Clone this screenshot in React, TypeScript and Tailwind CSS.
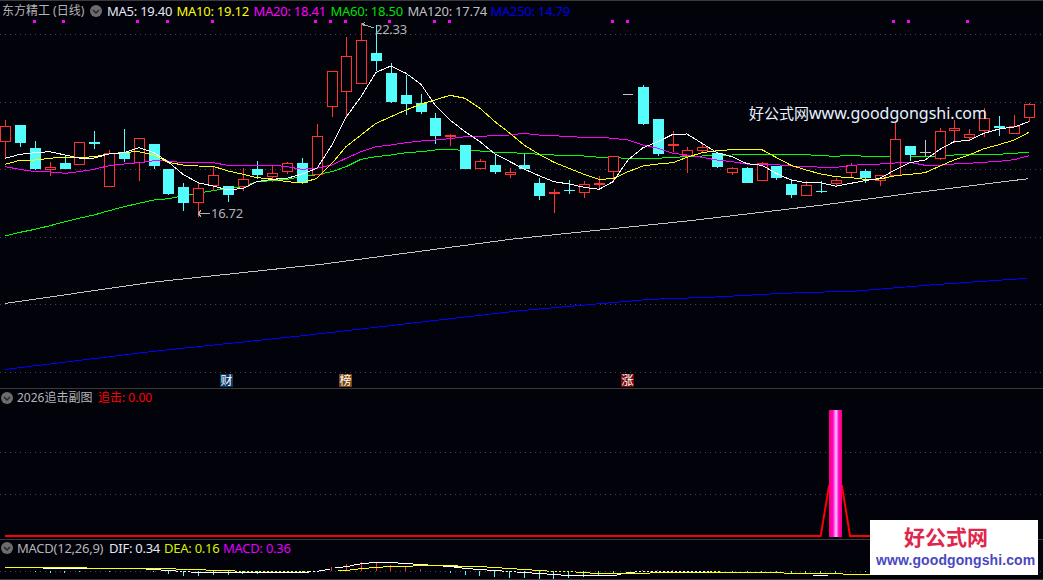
import React from 'react'

const bg = '#02020b'

// one row per trading day: body top, body bottom, high, low (read at 3x) and colour
type Candle = [number, number, number, number, 'r' | 'c' | 'g']
const candles: Candle[] = [
  [379, 427, 360, 475, 'r'], [376, 428, 376, 440, 'c'], [445, 507, 423, 510, 'c'], [502, 509, 487, 527, 'r'],
  [489, 507, 465, 507, 'c'], [427, 494, 427, 494, 'r'], [427, 431, 393, 447, 'c'], [460, 560, 450, 560, 'r'],
  [457, 476, 388, 486, 'c'], [415, 490, 415, 543, 'r'], [433, 497, 433, 507, 'c'], [507, 582, 507, 585, 'c'],
  [561, 608, 549, 632, 'c'], [565, 608, 549, 650, 'r'], [526, 557, 500, 572, 'r'], [558, 584, 558, 606, 'c'],
  [538, 562, 505, 572, 'r'], [507, 525, 484, 537, 'c'], [520, 530, 497, 545, 'r'], [490, 515, 487, 522, 'r'],
  [489, 549, 474, 552, 'c'], [409, 525, 373, 525, 'r'], [214, 320, 214, 351, 'r'], [169, 275, 111, 355, 'r'],
  [121, 251, 70, 251, 'r'], [159, 183, 75, 213, 'c'], [219, 306, 190, 308, 'c'], [285, 312, 225, 345, 'c'],
  [308, 336, 283, 342, 'c'], [354, 408, 340, 432, 'c'], [405, 410, 403, 438, 'r'], [435, 507, 435, 507, 'c'],
  [484, 507, 478, 507, 'r'], [495, 515, 465, 522, 'c'], [517, 524, 505, 533, 'r'], [495, 507, 462, 507, 'c'],
  [549, 588, 534, 600, 'c'], [577, 580, 568, 638, 'r'], [570, 572, 540, 582, 'c'], [553, 578, 544, 594, 'r'],
  [550, 553, 528, 568, 'r'], [469, 515, 469, 545, 'r'], [283, 284, 283, 284, 'g'], [261, 372, 256, 375, 'c'],
  [357, 462, 357, 468, 'c'], [433, 437, 393, 455, 'r'], [451, 467, 440, 518, 'r'], [442, 452, 433, 460, 'r'],
  [459, 500, 455, 503, 'c'], [505, 518, 502, 525, 'r'], [504, 549, 502, 549, 'c'], [490, 544, 487, 544, 'r'],
  [498, 534, 498, 540, 'c'], [552, 585, 537, 594, 'c'], [556, 587, 544, 587, 'r'], [574, 577, 544, 578, 'c'],
  [541, 551, 533, 558, 'r'], [496, 518, 490, 530, 'r'], [513, 535, 507, 548, 'c'], [526, 544, 526, 558, 'r'],
  [418, 527, 370, 527, 'r'], [438, 465, 438, 484, 'c'], [457, 459, 420, 468, 'g'], [394, 476, 385, 479, 'r'],
  [385, 392, 360, 430, 'r'], [403, 413, 388, 420, 'r'], [355, 394, 325, 410, 'r'], [379, 384, 348, 408, 'c'],
  [379, 401, 345, 403, 'r'], [313, 353, 310, 367, 'r'],
]

const ma5 = [
  475, 463, 458, 455, 465, 474, 474, 462, 458, 443, 458, 485, 523, 548, 558, 570, 565, 545, 538, 535, 522, 505, 435, 352,
  290, 217, 198, 220, 253, 315, 360, 395, 425, 462, 485, 507, 527, 545, 552, 562, 568, 545, 480, 443, 425, 403, 402,
  430, 458, 470, 491, 496, 520, 540, 548, 548, 559, 550, 542, 535, 510, 488, 480, 448, 425, 421, 400, 387, 381, 365,
]
const ma10 = [
  493, 481, 480, 475, 471, 473, 470, 462, 457, 455, 465, 487, 495, 498, 499, 513, 523, 533, 537, 545, 549, 535, 490, 440,
  405, 370, 350, 330, 312, 300, 286, 295, 325, 365, 400, 435, 463, 487, 505, 523, 538, 536, 515, 498, 492, 488, 472,
  458, 452, 449, 449, 449, 472, 496, 510, 522, 530, 533, 538, 537, 527, 523, 518, 498, 480, 465, 446, 434, 420, 397,
]
const ma20 = [
  500, 508, 515, 516, 520, 515, 508, 497, 492, 488, 482, 483, 488, 488, 488, 496, 497, 497, 495, 500, 508, 505, 495, 475,
  455, 440, 435, 428, 423, 420, 416, 410, 410, 406, 405, 400, 405, 407, 410, 412, 412, 415, 420, 435, 445, 460, 465,
  472, 480, 485, 492, 494, 494, 498, 499, 502, 502, 497, 492, 492, 489, 487, 496, 496, 492, 490, 487, 484, 479, 467,
]
const ma60 = [
  708, 697, 688, 677, 665, 655, 645, 632, 620, 610, 600, 596, 588, 580, 572, 565, 560, 545, 542, 538, 530, 524, 515, 500,
  478, 470, 465, 458, 455, 450, 448, 452, 453, 457, 458, 460, 463, 465, 467, 468, 472, 473, 475, 475, 475, 472, 470,
  468, 466, 465, 463, 463, 464, 464, 464, 467, 469, 466, 469, 469, 468, 468, 468, 468, 465, 464, 464, 463, 460, 457,
]

const ma120: [number, number][] = [[5, 303.5], [150, 282.5], [300, 266.5], [320, 264.5], [513, 239], [690, 220.7], [823, 205], [923, 191.7], [1028, 178.7]]
const ma250: [number, number][] = [[5, 369.5], [150, 351.7], [300, 336], [520, 310.7], [650, 299.3], [710, 297.3], [783, 293.3], [857, 291], [930, 285], [1027, 278.3]]

const dots = [34, 63, 137, 167, 212, 315, 330, 345, 389, 434, 449, 612, 627, 893, 908, 967]

// macd steps, [x1, x2, y] in page pixels
const y3 = (v: number) => 555 + v / 3
const dea: [number, number, number][] = [
  [5, 43, 37], [43, 87, 38], [87, 176, 40.5], [176, 206, 43], [206, 235, 46],
  [338, 350, 46], [350, 358, 43], [358, 369, 40], [369, 383, 37], [383, 413, 35], [413, 458, 31], [458, 487, 34],
  [487, 502, 37], [502, 517, 40], [517, 532, 43], [532, 547, 46], [576, 590, 52], [590, 620, 55], [620, 650, 54],
  [650, 739, 51], [739, 784, 53], [784, 784, 53], [784, 843, 56], [843, 870, 58],
]
const dif: [number, number, number][] = [
  [43, 87, 40.5], [146, 161, 43], [161, 176, 46], [191, 309, 52], [319, 325, 46], [325, 330, 44], [335, 343, 37], [343, 350, 34],
  [350, 354, 32], [354, 360, 28], [360, 369, 25], [369, 398, 22], [398, 413, 25], [413, 428, 28], [443, 458, 34],
  [454, 462, 37], [462, 473, 40], [473, 487, 43], [487, 502, 46], [517, 532, 52], [532, 547, 55], [547, 561, 58],
  [561, 617, 61], [617, 621, 58], [626, 635, 52], [739, 784, 53], [813, 828, 60],
]
const difDotted: [number, number][] = [[176, 191], [309, 319], [502, 517], [635, 710]]
const deaDotted: [number, number][] = [[235, 309], [547, 576], [710, 720]]
const macdBars: [number, number, 'r' | 'c'][] = [
  [35, 50, 'c'], [50, 53, 'c'], [64, 53, 'c'], [79, 51, 'c'], [109, 51, 'c'], [153, 51, 'c'], [168, 56, 'c'], [183, 63, 'c'],
  [198, 63, 'c'], [213, 60, 'c'], [228, 60, 'c'], [242, 56, 'c'], [257, 56, 'c'], [272, 51, 'c'], [287, 51, 'c'], [302, 51, 'c'],
  [331, 37, 'r'], [346, 28, 'r'], [361, 22, 'r'], [376, 22, 'r'], [390, 30, 'r'], [405, 35, 'r'], [420, 42, 'r'],
  [450, 53, 'c'], [465, 60, 'c'], [479, 63, 'c'], [494, 67, 'c'], [509, 68, 'c'], [524, 68, 'c'], [539, 72, 'c'], [553, 72, 'c'],
  [568, 68, 'c'], [583, 65, 'c'], [598, 60, 'c'], [613, 55, 'c'],
  [642, 46, 'r'], [657, 46, 'r'], [672, 46, 'r'], [687, 47, 'r'],
  [732, 51, 'c'], [747, 52, 'c'], [761, 52, 'c'], [776, 52, 'c'], [791, 56, 'c'], [805, 56, 'c'], [820, 54, 'c'], [835, 54, 'c'], [865, 51, 'c'],
]

const cx = (i: number) => Math.round(5.3 + i * 14.83)
const path = (ys: number[]) => ys.map((v, i) => `${cx(i)},${(v / 3).toFixed(1)}`).join(' ')
const pts = (p: [number, number][]) => p.map(([x, y]) => `${x},${y}`).join(' ')

const Grid = ({ ys }: { ys: number[] }) => (
  <>
    {ys.map((y) => (
      <line key={y} x1="0" x2="1043" y1={y + 0.5} y2={y + 0.5} stroke="#45454b" strokeDasharray="1 4" />
    ))}
  </>
)

const Toggle = () => (
  <svg width="12" height="12" viewBox="0 0 12 12" className="shrink-0">
    <circle cx="6" cy="6" r="6" fill="#6c6c6c" />
    <path d="M3 5 L6 8 L9 5" fill="none" stroke="#22222a" strokeWidth="1.4" />
  </svg>
)

const MainChart = () => (
  <svg className="absolute inset-0" width="1043" height="388" viewBox="0 0 1043 388" shapeRendering="crispEdges">
    <Grid ys={[34, 102, 169, 237, 304, 372]} />
    {dots.map((x) => (
      <rect key={x} x={x - 1} y="20" width="3" height="3" fill="#ff00ff" />
    ))}
    <polyline points={pts(ma250)} fill="none" stroke="#0000ff" />
    <polyline points={pts(ma120)} fill="none" stroke="#c4c4c4" />
    <polyline points={path(ma60)} fill="none" stroke="#00ff00" />
    {candles.map(([top, bot, hi, lo, kind], i) => {
      const x = cx(i)
      const t = Math.round(top / 3)
      const b = Math.round(bot / 3)
      const h = Math.round(hi / 3)
      const l = Math.round(lo / 3)
      if (kind === 'g') {
        return i === 42 ? (
          <line key={i} x1={x - 5} x2={x + 5} y1={t + 0.5} y2={t + 0.5} stroke="#c4c4c4" />
        ) : (
          <g key={i} stroke="#c4c4c4">
            <line x1={x + 0.5} x2={x + 0.5} y1={h} y2={l} />
            <line x1={x - 5} x2={x + 6} y1={t + 0.5} y2={t + 0.5} />
          </g>
        )
      }
      const color = kind === 'r' ? '#ff3232' : '#54fcfc'
      return (
        <g key={i}>
          <line x1={x + 0.5} x2={x + 0.5} y1={h} y2={t} stroke={color} />
          <line x1={x + 0.5} x2={x + 0.5} y1={b} y2={l} stroke={color} />
          {kind === 'c' ? (
            <rect x={x - 5} y={t} width="11" height={Math.max(b - t, 1)} fill={color} />
          ) : (
            <rect x={x - 4.5} y={t + 0.5} width="10" height={Math.max(b - t - 1, 1)} fill={bg} stroke={color} />
          )}
        </g>
      )
    })}
    <polyline points={path(ma20)} fill="none" stroke="#ff00ff" />
    <polyline points={path(ma10)} fill="none" stroke="#ffff00" />
    <polyline points={path(ma5)} fill="none" stroke="#ffffff" />
    <path d="M362 24 L374 28 M362 24 L365 22.5 M362 24 L365 26" fill="none" stroke="#b0b0b0" />
    <path d="M198 213.5 H210 M198 213.5 L201 210.5 M198 213.5 L201 216.5" fill="none" stroke="#b0b0b0" />
  </svg>
)

const SubChart = () => (
  <svg className="absolute inset-0" width="1043" height="151" viewBox="0 388 1043 151">
    <defs>
      <linearGradient id="pillar" x1="0" x2="1" y1="0" y2="0">
        <stop offset="0" stopColor="#ff0070" />
        <stop offset="0.3" stopColor="#ff00c8" />
        <stop offset="0.55" stopColor="#ffc8ff" />
        <stop offset="0.75" stopColor="#ff00d0" />
        <stop offset="1" stopColor="#ff0060" />
      </linearGradient>
    </defs>
    <g shapeRendering="crispEdges">
      <Grid ys={[452, 494]} />
    </g>
    <polyline points="5,536 820.7,536 829,486 842,486 850,536 1030,536" fill="none" stroke="#ff0000" strokeWidth="2" />
    <rect x="829" y="410" width="13" height="127" fill="url(#pillar)" />
  </svg>
)

const MacdChart = () => (
  <svg className="absolute inset-0" width="1043" height="39" viewBox="0 540 1043 39" shapeRendering="crispEdges">
    <Grid ys={[571]} />
    {macdBars.map(([x, v, kind]) => (
      <line
        key={x}
        x1={x + 0.5}
        x2={x + 0.5}
        y1={kind === 'c' ? 571 : y3(v)}
        y2={kind === 'c' ? y3(v) : 571}
        stroke={kind === 'c' ? '#54fcfc' : '#ff3232'}
      />
    ))}
    {dif.map(([a, b, v]) => (
      <line key={a} x1={a} x2={b} y1={y3(v)} y2={y3(v)} stroke="#ffffff" />
    ))}
    {dea.map(([a, b, v]) => (
      <line key={a} x1={a} x2={b} y1={y3(v)} y2={y3(v)} stroke="#ffff00" />
    ))}
    {difDotted.map(([a, b]) => (
      <line key={a} x1={a} x2={b} y1="571.5" y2="571.5" stroke="#ffffff" strokeDasharray="2 2" />
    ))}
    {deaDotted.map(([a, b]) => (
      <line key={a} x1={a} x2={b} y1="571.5" y2="571.5" stroke="#ffff00" strokeDasharray="2 2" />
    ))}
  </svg>
)

const Tag = ({ text, className }: { text: string; className: string }) => (
  <span className={`absolute top-[373px] flex h-[13px] w-[13px] items-center justify-center text-[12px] leading-none tracking-normal text-white ${className}`}>
    {text}
  </span>
)

const App: React.FC = () => {
  return (
    <div
      className="relative flex h-[580px] w-[1043px] flex-col overflow-hidden bg-[#02020b] text-[13px] leading-none text-[#c0c0c0] tracking-[-0.25px]"
      style={{ fontFamily: '"Noto Sans", "Noto Sans CJK SC", sans-serif' }}
    >
      <div className="relative h-[388px] shrink-0 border-t border-[#3a3a3a]">
        <div className="absolute inset-x-0 -top-px h-[388px]">
          <MainChart />
        </div>
        <div className="relative flex h-[20px] items-center whitespace-nowrap pl-[2px]">
          <span className="w-[88px] text-[12px] tracking-normal text-[#b4b4b4]">东方精工 (日线)</span>
          <Toggle />
          <div className="ml-[5px] flex items-center">
            <span className="w-[69.5px] text-[#e4e8f0]">MA5: 19.40</span>
            <span className="w-[77px] text-[#ffff00]">MA10: 19.12</span>
            <span className="w-[77px] text-[#ff00ff]">MA20: 18.41</span>
            <span className="w-[77px] text-[#00e000]">MA60: 18.50</span>
            <span className="w-[83px] text-[#c0c0c0]">MA120: 17.74</span>
            <span className="text-[#0000e8]">MA250: 14.79</span>
          </div>
        </div>
        <span className="absolute left-[375px] top-[22px] text-[#b4b4b4]">22.33</span>
        <span className="absolute left-[211px] top-[206px] text-[#b4b4b4]">16.72</span>
        <span className="absolute left-[749px] top-[104px] whitespace-nowrap text-[16px] tracking-normal text-[#e8f2ff]">
          <span className="text-[15px]">好公式网</span>www.goodgongshi.com
        </span>
        <Tag text="财" className="left-[220px] bg-[#0b3a68]" />
        <Tag text="榜" className="left-[339px] bg-[#7a4510]" />
        <Tag text="涨" className="left-[621px] bg-[#7a0a0a]" />
      </div>

      <div className="relative h-[151px] shrink-0 border-t border-[#3a3a3a]">
        <div className="absolute inset-x-0 -top-px h-[151px]">
          <SubChart />
        </div>
        <div className="relative flex h-[17px] items-center whitespace-nowrap pl-[1px] text-[12px] tracking-normal">
          <Toggle />
          <span className="ml-[4px] w-[81px] text-[#b4b4b4]">2026追击副图</span>
          <span className="text-[#ff0000]">追击: 0.00</span>
        </div>
      </div>

      <div className="relative h-[41px] shrink-0 border-y border-[#3a3a3a]">
        <MacdChart />
        <div className="relative flex h-[16px] items-center whitespace-nowrap pl-[1px]">
          <Toggle />
          <span className="ml-[4px] w-[92px] text-[#b4b4b4]">MACD(12,26,9)</span>
          <span className="w-[55px] text-[#e4e8f0]">DIF: 0.34</span>
          <span className="w-[59px] text-[#d8f000]">DEA: 0.16</span>
          <span className="text-[#e000ff]">MACD: 0.36</span>
        </div>
      </div>

      <div
        className="absolute left-[870px] top-[520px] flex h-[55px] w-[168px] flex-col bg-white pt-[5px] tracking-normal"
        style={{ fontFamily: '"Liberation Sans", "Noto Sans CJK SC", sans-serif' }}
      >
        <span className="pl-[34px] text-[21px] font-bold leading-[26px] text-[#e0264c]">好公式网</span>
        <span className="mt-[1px] pl-[6px] text-[14px] font-bold leading-[16px] tracking-[0.1px] text-[#4a48c0]">www.goodgongshi.com</span>
      </div>
    </div>
  )
}

export default App
